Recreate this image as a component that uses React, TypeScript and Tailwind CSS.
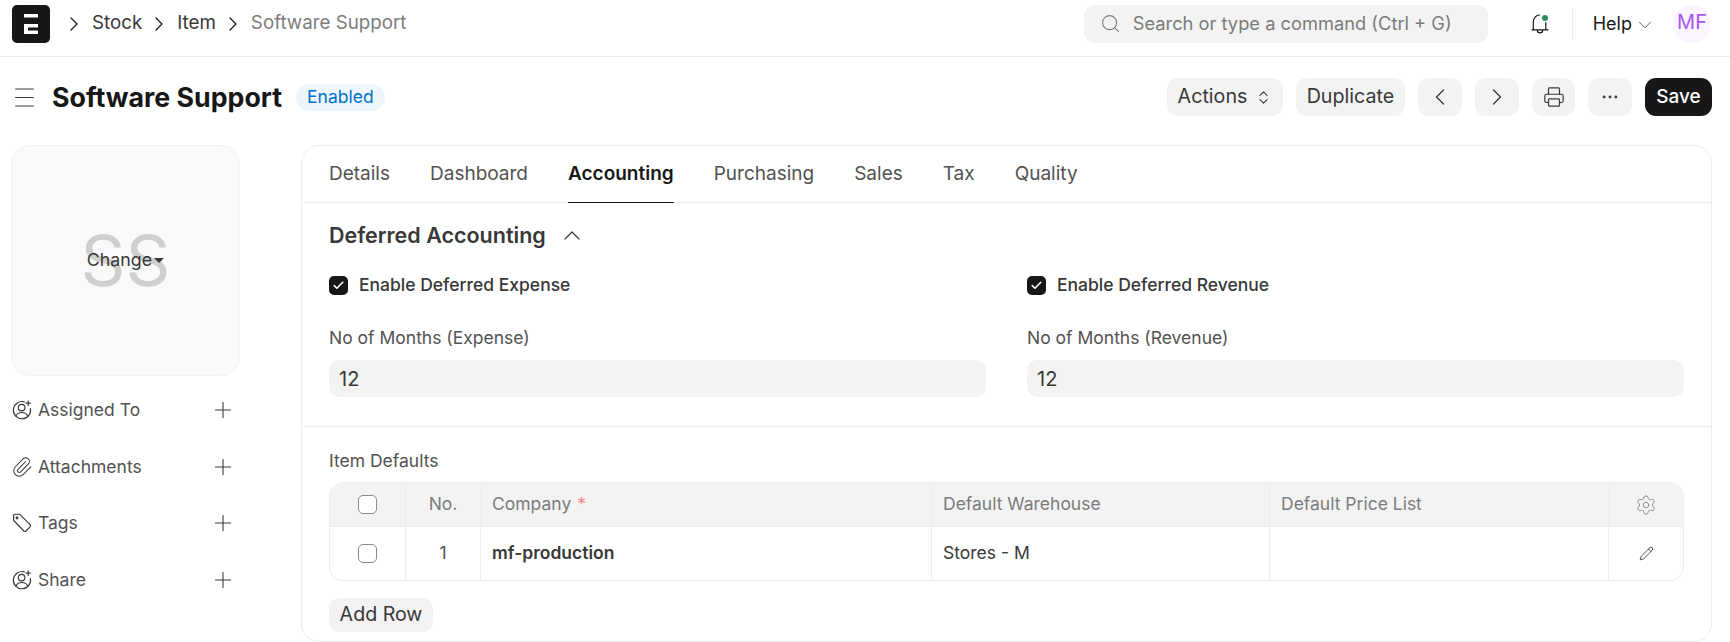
import React from "react";
import { ChevronRight, ChevronLeft, ChevronDown, ChevronsUpDown, Search, Printer, Ellipsis, Plus, Check, Settings, Pencil, Paperclip } from "lucide-react";

const font = { fontFamily: "Inter, 'Liberation Sans', sans-serif" };

function Logo() {
  return (
    <div className="flex h-[38px] w-[38px] shrink-0 items-center justify-center rounded-[5px] bg-[#171717]">
      <svg width="14" height="20" viewBox="0 0 14 20" fill="#fff">
        <rect x="0" y="0" width="14" height="3.5" />
        <rect x="0" y="10" width="14" height="3.5" />
        <rect x="0" y="10" width="4" height="10" />
        <rect x="0" y="16.5" width="14" height="3.5" />
      </svg>
    </div>
  );
}

function UserPlus() {
  return (
    <svg width="20" height="20" viewBox="0 0 20 20" fill="none" stroke="#383838" strokeWidth="1.15" strokeLinecap="round">
      <path d="M12.4 1.9A8.6 8.6 0 1 0 18.4 8.6" />
      <circle cx="9.6" cy="7.6" r="3.3" />
      <path d="M3.9 16.2c1-2.6 3-3.7 5.9-3.7s4.9 1.1 5.9 3.7" />
      <path d="M16.2 0.8v4.6M13.9 3.1h4.6" />
    </svg>
  );
}

function TagIcon() {
  return (
    <svg width="20" height="20" viewBox="0 0 20 20" fill="none" stroke="#383838" strokeWidth="1.15" strokeLinejoin="round">
      <path d="M1.6 6.5Q1.3 7 1.7 7.5L11.8 18Q13 19 14 18L18.3 13.7Q19.2 12.7 18.3 11.8L8 1.7Q7.5 1.2 6.9 1.2L2.6 1.2Q1.6 1.2 1.6 2.2Z" />
      <circle cx="5" cy="5" r="0.9" />
    </svg>
  );
}

function BellIcon() {
  return (
    <div className="relative h-[20px] w-[18px]">
      <svg width="18" height="20" viewBox="0 0 18 20" fill="none" stroke="#171717" strokeWidth="1.2" strokeLinecap="round">
        <path d="M2.3 15.5V8.5C2.3 4 5 1 8.6 1M14.8 8.5V15.5M1 15.8H17M6.3 16.2a2.7 2.7 0 0 0 5.4 0" />
      </svg>
      <span className="absolute right-[1px] top-[1px] h-[6px] w-[6px] rounded-full bg-[#278f5e]" />
    </div>
  );
}

function Crumb({ children, muted }: { children: React.ReactNode; muted?: boolean }) {
  return (
    <div className="flex items-center">
      <ChevronRight size={24} strokeWidth={1.2} className="mr-[6px] text-[#171717]" />
      <span className={muted ? "text-[#7c7c7c]" : "text-[#383838]"}>{children}</span>
    </div>
  );
}

function Side({ icon, label }: { icon: React.ReactNode; label: string }) {
  return (
    <div className="flex h-[56.5px] items-center">
      <div className="ml-[1px] flex w-[26px] items-center">{icon}</div>
      <span className="flex-1 text-[#525252]">{label}</span>
      <Plus size={26} strokeWidth={1} className="mr-[4px] text-[#383838]" />
    </div>
  );
}

function GrayBtn({ children, className }: { children: React.ReactNode; className?: string }) {
  return (
    <button className={"flex h-[38px] items-center justify-center rounded-[11px] bg-[#f3f3f3] text-[19.7px] text-[#383838] " + (className ?? "")}>
      {children}
    </button>
  );
}

function Box() {
  return <span className="block h-[19px] w-[19px] rounded-[5px] border border-[#8a8a8a] bg-white" />;
}

function CheckField({ label }: { label: string }) {
  return (
    <div className="flex h-[19px] items-center gap-[11px]">
      <span className="flex h-[19px] w-[19px] items-center justify-center rounded-[5px] bg-[#171717]">
        <Check size={13} strokeWidth={3} className="text-white" />
      </span>
      <span className="font-medium text-[#383838]">{label}</span>
    </div>
  );
}

function NumberField({ label }: { label: string }) {
  return (
    <div>
      <div className="mb-[10px] leading-[24px] text-[#525252]">{label}</div>
      <div className="flex h-[37px] items-center rounded-[10px] bg-[#f3f3f3] px-[10px] text-[20px] text-[#383838]">12</div>
    </div>
  );
}

export default function App() {
  return (
    <div className="h-[642px] w-[1730px] overflow-hidden bg-white text-[17.5px]" style={font}>
      <nav className="flex h-[57px] items-center border-b border-[#ededed] pb-[9px] pl-[12px] pr-[19px]">
        <Logo />
        <div className="ml-[12px] flex items-center gap-[5px] text-[18.75px]">
          <Crumb>Stock</Crumb>
          <Crumb>Item</Crumb>
          <Crumb muted>Software Support</Crumb>
        </div>
        <div className="ml-auto flex h-[38px] w-[404px] items-center gap-[12px] rounded-[11px] bg-[#f3f3f3] pl-[16px] text-[18.3px] text-[#7c7c7c]">
          <Search size={21} strokeWidth={1.2} />
          <span>Search or type a command (Ctrl + G)</span>
        </div>
        <div className="ml-[43px]"><BellIcon /></div>
        <div className="ml-[23px] h-[32px] w-px bg-[#ededed]" />
        <div className="ml-[20px] flex items-center gap-[2px] text-[18px] text-[#171717]">
          <span>Help</span>
          <ChevronDown size={22} strokeWidth={1} className="mt-[2px] text-[#525252]" />
        </div>
        <div className="ml-[17px] flex h-[38px] w-[38px] items-center justify-center rounded-full bg-[#faf5ff] pb-[4px] text-[20px] text-[#a855f7]">MF</div>
      </nav>

      <header className="flex h-[88px] items-center pb-[8px] pl-[15px] pr-[18px]">
        <svg width="19" height="19" viewBox="0 0 19 19" stroke="#383838" strokeWidth="1.1" strokeLinecap="round">
          <path d="M0.6 1H18.4M0.6 9.5H18.4M0.6 18H18.4" />
        </svg>
        <h1 className="ml-[18px] text-[26.75px] font-bold text-[#171717]">Software Support</h1>
        <span className="ml-[14px] flex h-[27px] items-center rounded-full bg-[#edf6fd] px-[11px] text-[17.5px] text-[#0070cc]">Enabled</span>
        <div className="ml-auto flex items-center gap-[13px]">
          <GrayBtn className="w-[116px] gap-[8px]">
            <span>Actions</span>
            <ChevronsUpDown size={17} strokeWidth={1.5} />
          </GrayBtn>
          <GrayBtn className="w-[109px]">Duplicate</GrayBtn>
          <GrayBtn className="w-[44px]"><ChevronLeft size={28} strokeWidth={1.1} /></GrayBtn>
          <GrayBtn className="w-[44px]"><ChevronRight size={28} strokeWidth={1.1} /></GrayBtn>
          <GrayBtn className="w-[43px]"><Printer size={22} strokeWidth={1.3} /></GrayBtn>
          <GrayBtn className="w-[44px]"><Ellipsis size={20} strokeWidth={1.5} /></GrayBtn>
          <button className="flex h-[38px] w-[67px] items-center justify-center rounded-[11px] bg-[#171717] text-[19px] font-medium text-white">Save</button>
        </div>
      </header>

      <div className="flex items-start pl-[11px]">
        <aside className="w-[229px] shrink-0">
          <div className="relative flex h-[231px] items-center justify-center rounded-[18px] border border-[#f3f3f3] bg-[#f9f9f9]">
            <span className="text-[70px] leading-none text-[#cfcfcf]">SS</span>
            <div className="absolute inset-0 flex items-center justify-center gap-[2px] text-[17.8px] text-[#383838]">
              <span>Change</span>
              <span className="h-0 w-0 border-x-[5px] border-t-[5px] border-x-transparent border-t-[#383838]" />
            </div>
          </div>
          <div className="mt-[6px]">
            <Side icon={<UserPlus />} label="Assigned To" />
            <Side icon={<Paperclip size={22} strokeWidth={1.1} className="-ml-[1px] text-[#383838]" />} label="Attachments" />
            <Side icon={<TagIcon />} label="Tags" />
            <Side icon={<UserPlus />} label="Share" />
          </div>
        </aside>

        <main className="ml-[61px] mr-[18px] h-[497px] flex-1 rounded-[18px] border border-[#ededed]">
          <div className="flex h-[57px] gap-[40px] border-b border-[#ededed] px-[27px] text-[19px]">
            {["Details", "Dashboard", "Accounting", "Purchasing", "Sales", "Tax", "Quality"].map((t) => (
              <div key={t} className={"flex items-center " + (t === "Accounting" ? "-mb-px border-b border-[#171717] font-semibold text-[#171717]" : "text-[#525252]")}>
                {t}
              </div>
            ))}
          </div>

          <section className="border-b border-[#ededed] px-[27px] pb-[29px]">
            <div className="mb-[6px] flex h-[67px] items-center gap-[18px] pb-[3px]">
              <span className="text-[21.5px] font-semibold text-[#383838]">Deferred Accounting</span>
              <svg width="16" height="9" viewBox="0 0 16 9" fill="none" stroke="#383838" strokeWidth="1.2" strokeLinecap="round" strokeLinejoin="round">
                <path d="M1 8L8 1L15 8" />
              </svg>
            </div>
            <div className="grid grid-cols-2 gap-x-[41px]">
              <div>
                <CheckField label="Enable Deferred Expense" />
                <div className="mt-[31px]"><NumberField label="No of Months (Expense)" /></div>
              </div>
              <div>
                <CheckField label="Enable Deferred Revenue" />
                <div className="mt-[31px]"><NumberField label="No of Months (Revenue)" /></div>
              </div>
            </div>
          </section>

          <section className="px-[27px] pt-[22px]">
            <div className="mb-[9px] h-[24px] leading-[24px] text-[#525252]">Item Defaults</div>
            <div className="overflow-hidden rounded-[14px] border border-[#ededed]">
              <div className="grid h-[43px] grid-cols-[76px_75px_451px_338px_339px_1fr] items-stretch bg-[#f3f3f3] text-[#7c7c7c]">
                <div className="flex items-center justify-center border-r border-[#ededed]"><Box /></div>
                <div className="flex items-center justify-center border-r border-[#ededed]">No.</div>
                <div className="flex items-center gap-[6px] border-r border-[#ededed] px-[11px]">Company <span className="text-[#f08a8a]">*</span></div>
                <div className="flex items-center border-r border-[#ededed] px-[11px]">Default Warehouse</div>
                <div className="flex items-center border-r border-[#ededed] px-[11px]">Default Price List</div>
                <div className="flex items-center justify-center"><Settings size={22} strokeWidth={0.9} /></div>
              </div>
              <div className="grid h-[54px] grid-cols-[76px_75px_451px_338px_339px_1fr] border-t border-[#ededed] text-[#383838]">
                <div className="flex items-center justify-center border-r border-[#ededed]"><Box /></div>
                <div className="flex items-center justify-center border-r border-[#ededed] text-[#525252]">1</div>
                <div className="flex items-center border-r border-[#ededed] px-[11px] font-semibold">mf-production</div>
                <div className="flex items-center border-r border-[#ededed] px-[11px]">Stores - M</div>
                <div className="border-r border-[#ededed]" />
                <div className="flex items-center justify-center"><Pencil size={15} strokeWidth={1.2} className="text-[#171717]" /></div>
              </div>
            </div>
            <button className="mt-[17px] flex h-[34px] w-[104px] items-center justify-center rounded-[10px] bg-[#f3f3f3] text-[19.6px] text-[#383838]">Add Row</button>
          </section>
        </main>
      </div>
    </div>
  );
}
